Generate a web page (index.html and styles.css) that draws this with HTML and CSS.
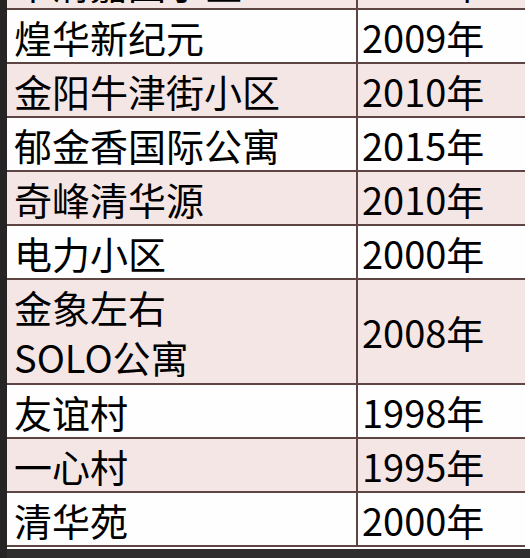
FILE: index.html
```html
<!DOCTYPE html>
<html lang="zh-CN">
<head>
<meta charset="utf-8">
<title>小区年份</title>
<link rel="stylesheet" href="styles.css">
</head>
<body>
<div class="page">
  <div class="edge"></div>
  <div class="sheet">
    <div class="table">
      <div class="cell name pink cut">华清嘉园小区</div><div class="cell year pink cut">2003年</div>
      <div class="cell name">煌华新纪元</div><div class="cell year">2009年</div>
      <div class="cell name pink">金阳牛津街小区</div><div class="cell year pink">2010年</div>
      <div class="cell name">郁金香国际公寓</div><div class="cell year">2015年</div>
      <div class="cell name pink">奇峰清华源</div><div class="cell year pink">2010年</div>
      <div class="cell name">电力小区</div><div class="cell year">2000年</div>
      <div class="cell name pink tall">金象左右<br>SOLO公寓</div><div class="cell year pink tall">2008年</div>
      <div class="cell name">友谊村</div><div class="cell year">1998年</div>
      <div class="cell name pink">一心村</div><div class="cell year pink">1995年</div>
      <div class="cell name">清华苑</div><div class="cell year">2000年</div>
    </div>
    <div class="foot"></div>
  </div>
</div>
</body>
</html>
```

FILE: styles.css
```css
html, body {
  margin: 0;
  padding: 0;
  background: #ffffff;
}

.page {
  display: flex;
  width: 530px;
  height: 558px;
  overflow: hidden;
}

.edge {
  width: 7px;
  flex: none;
  background: #262424;
}

.sheet {
  flex: 1;
  display: flex;
  flex-direction: column;
}

.table {
  display: grid;
  grid-template-columns: 351px 167px;
  margin-top: -44px;
  font-family: "Noto Sans CJK SC", "Noto Sans", sans-serif;
  font-size: 38px;
  color: #000000;
}

.cell {
  height: 52px;
  border-bottom: 2px solid #5e4442;
  display: flex;
  align-items: center;
  background: #fefefe;
  white-space: nowrap;
}

.cell.pink {
  background: #f5e6e6;
}

.cell.tall {
  height: 103px;
  line-height: 50px;
}

.name {
  border-right: 2px solid #5e4442;
  padding-left: 7px;
}

.year {
  padding-left: 4px;
}

.foot {
  margin-top: 2px;
  flex: 1;
  background: #2f2d2d;
}
```
